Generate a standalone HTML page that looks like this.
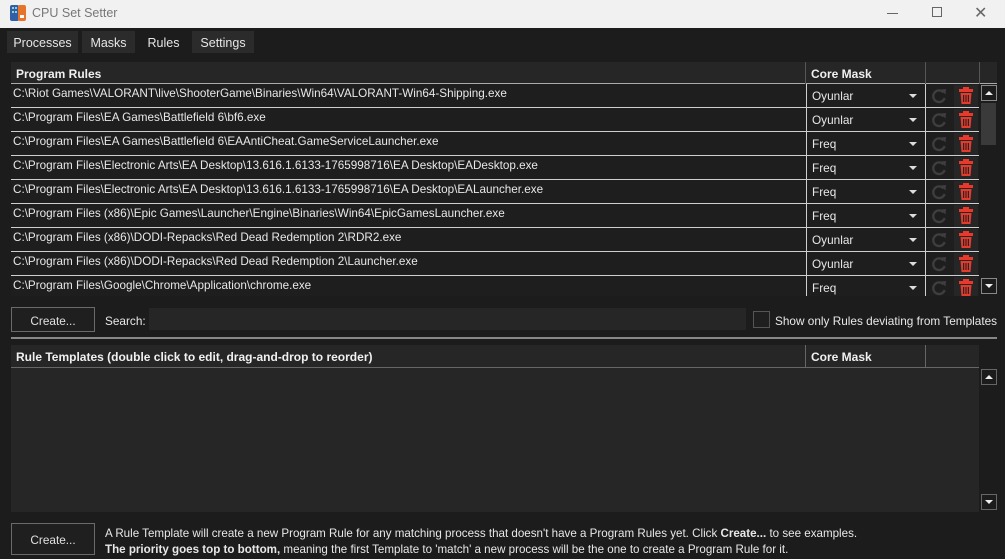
<!DOCTYPE html><html><head><style>
*{box-sizing:border-box;margin:0;padding:0}
body{width:1005px;height:559px;overflow:hidden;background:#1c1c1c;font-family:"Liberation Sans",sans-serif;font-size:11.8px;color:#e8e8e8;position:relative}
.a{position:absolute}
#tb{left:0;top:0;width:1005px;height:28px;background:#f1f1f1;color:#777}
.tab{top:31px;height:22px;background:#2b2b2b;padding:5px 0;text-align:center;font-size:12.5px;color:#e6e6e6}
.hdr{background:#262626;font-weight:bold;font-size:12px;color:#f0f0f0}
.row{left:11px;width:968px;height:24px;border-bottom:1px solid #cfcfcf;background:#1e1e1e}
.row span{position:absolute;top:3px;font-size:11.7px;white-space:nowrap}
.cm{position:absolute;left:795px;top:0;width:120px;height:23px;border-left:1px solid #cfcfcf;border-right:1px solid #cfcfcf}
.cm b{font-weight:normal;position:absolute;left:5px;top:5px}
.cm i{position:absolute;right:8px;top:10px;width:0;height:0;border-left:4px solid transparent;border-right:4px solid transparent;border-top:4px solid #ddd}
.del{position:absolute;left:943px;top:1px;width:24px;height:22px;background:#262626}
.btn{left:11px;width:84px;border:1px solid #6a6a6a;background:#1f1f1f;text-align:center;color:#e0e0e0}
</style></head><body>
<div id="tb" class="a">
<svg class="a" style="left:9px;top:4px" width="18" height="18" viewBox="0 0 18 18"><rect x="1" y="1" width="9" height="16" rx="2" fill="#2f5fa5"/><rect x="9" y="1" width="8" height="16" rx="2" fill="#e8732a"/><rect x="3" y="3" width="2" height="2" fill="#9cc"/><rect x="6" y="3" width="2" height="2" fill="#9cc"/><rect x="3" y="7" width="2" height="2" fill="#9cc"/><rect x="6" y="7" width="2" height="2" fill="#9cc"/><rect x="11" y="11" width="4" height="3" fill="#fff"/></svg>
<div class="a" style="left:32px;top:6px;font-size:12.5px;color:#777">CPU Set Setter</div>
<div class="a" style="left:887px;top:13px;width:11px;height:1px;background:#666"></div>
<div class="a" style="left:932px;top:7px;width:10px;height:10px;border:1px solid #666"></div>
<div class="a" style="left:974px;top:3px;font-size:16px;color:#666">✕</div>
</div>
<div class="a tab" style="left:7px;width:71px">Processes</div>
<div class="a tab" style="left:82px;width:53px">Masks</div>
<div class="a tab" style="left:140px;width:47px;background:#1c1c1c">Rules</div>
<div class="a tab" style="left:192px;width:62px">Settings</div>

<div class="a hdr" style="left:11px;top:62px;width:986px;height:22px;border-bottom:1px solid #aaa">
<span class="a" style="left:5px;top:5px">Program Rules</span>
<div class="a" style="left:794px;top:0;height:22px;border-left:1px solid #555"></div>
<span class="a" style="left:800px;top:5px">Core Mask</span>
<div class="a" style="left:914px;top:0;height:22px;border-left:1px solid #555"></div>
<div class="a" style="left:968px;top:0;height:22px;border-left:1px solid #555"></div>
</div>
<div class="a" style="left:980px;top:84px;width:17px;height:212px;background:#1c1c1c"></div>
<div class="a" style="left:981px;top:85px;width:16px;height:16px;border:1px solid #888;background:#1c1c1c"><div class="a" style="left:3px;top:5px;border-left:4px solid transparent;border-right:4px solid transparent;border-bottom:4px solid #eee"></div></div>
<div class="a" style="left:981px;top:103px;width:15px;height:42px;background:#3a3a3a"></div>
<div class="a" style="left:981px;top:278px;width:16px;height:16px;border:1px solid #888;background:#1c1c1c"><div class="a" style="left:3px;top:5px;border-left:4px solid transparent;border-right:4px solid transparent;border-top:4px solid #eee"></div></div>

<div id="rows"></div>
<script>
var d=[["C:\\Riot Games\\VALORANT\\live\\ShooterGame\\Binaries\\Win64\\VALORANT-Win64-Shipping.exe","Oyunlar"],
["C:\\Program Files\\EA Games\\Battlefield 6\\bf6.exe","Oyunlar"],
["C:\\Program Files\\EA Games\\Battlefield 6\\EAAntiCheat.GameServiceLauncher.exe","Freq"],
["C:\\Program Files\\Electronic Arts\\EA Desktop\\13.616.1.6133-1765998716\\EA Desktop\\EADesktop.exe","Freq"],
["C:\\Program Files\\Electronic Arts\\EA Desktop\\13.616.1.6133-1765998716\\EA Desktop\\EALauncher.exe","Freq"],
["C:\\Program Files (x86)\\Epic Games\\Launcher\\Engine\\Binaries\\Win64\\EpicGamesLauncher.exe","Freq"],
["C:\\Program Files (x86)\\DODI-Repacks\\Red Dead Redemption 2\\RDR2.exe","Oyunlar"],
["C:\\Program Files (x86)\\DODI-Repacks\\Red Dead Redemption 2\\Launcher.exe","Oyunlar"],
["C:\\Program Files\\Google\\Chrome\\Application\\chrome.exe","Freq"]];
var h="";
var ic='<svg class="a" style="left:920px;top:4px" width="16" height="16" viewBox="0 0 16 16"><path d="M12.5 4.5A5.8 5.8 0 1 0 13.6 10" fill="none" stroke="#3e3e3e" stroke-width="2.4"/><path d="M9.5 1.5L15 1L14.5 6.5Z" fill="#3e3e3e"/></svg>';
var tr='<div class="del"><svg class="a" style="left:5px;top:2px" width="14" height="18" viewBox="0 0 14 18"><rect x="4" y="0" width="6" height="2" fill="#e53a2c"/><rect x="0" y="2" width="14" height="3" fill="#e53a2c"/><path d="M1.5 6H12.5L11.5 17H2.5Z" fill="#e53a2c"/><rect x="4" y="8" width="1.2" height="7" fill="#262626"/><rect x="6.4" y="8" width="1.2" height="7" fill="#262626"/><rect x="8.8" y="8" width="1.2" height="7" fill="#262626"/></svg></div>';
for(var i=0;i<9;i++){var t=84+i*24;h+='<div class="a row" style="top:'+t+'px;'+(i==8?'height:20px;overflow:hidden;border:none;':'')+'"><span style="left:2px">'+d[i][0]+'</span><div class="cm"><b>'+d[i][1]+'</b><i></i></div>'+ic+tr+'</div>';}
document.getElementById("rows").innerHTML=h;
</script>

<div class="a btn" style="top:307px;height:25px;padding-top:6px">Create...</div>
<div class="a" style="left:105px;top:314px">Search:</div>
<div class="a" style="left:149px;top:308px;width:597px;height:22px;background:#262626"></div>
<div class="a" style="left:753px;top:311px;width:17px;height:17px;border:1px solid #555;background:#1f1f1f"></div>
<div class="a" style="left:775px;top:314px">Show only Rules deviating from Templates</div>
<div class="a" style="left:11px;top:337px;width:986px;height:2px;background:#888"></div>

<div class="a hdr" style="left:11px;top:345px;width:968px;height:23px;border-bottom:1px solid #666">
<span class="a" style="left:5px;top:5px">Rule Templates (double click to edit, drag-and-drop to reorder)</span>
<div class="a" style="left:794px;top:0;height:22px;border-left:1px solid #666"></div>
<span class="a" style="left:800px;top:5px">Core Mask</span>
<div class="a" style="left:914px;top:0;height:22px;border-left:1px solid #666"></div>
</div>
<div class="a" style="left:11px;top:368px;width:968px;height:144px;background:#262626"></div>
<div class="a" style="left:981px;top:369px;width:16px;height:16px;border:1px solid #666"><div class="a" style="left:3px;top:5px;border-left:4px solid transparent;border-right:4px solid transparent;border-bottom:4px solid #eee"></div></div>
<div class="a" style="left:981px;top:494px;width:16px;height:16px;border:1px solid #666"><div class="a" style="left:3px;top:5px;border-left:4px solid transparent;border-right:4px solid transparent;border-top:4px solid #eee"></div></div>

<div class="a btn" style="top:523px;height:32px;padding-top:9px">Create...</div>
<div class="a" style="left:105px;top:526px;line-height:16px;white-space:nowrap;font-size:11.6px">A Rule Template will create a new Program Rule for any matching process that doesn't have a Program Rules yet. Click <b>Create...</b> to see examples.<br><b>The priority goes top to bottom,</b> meaning the first Template to 'match' a new process will be the one to create a Program Rule for it.</div>
</body></html>
